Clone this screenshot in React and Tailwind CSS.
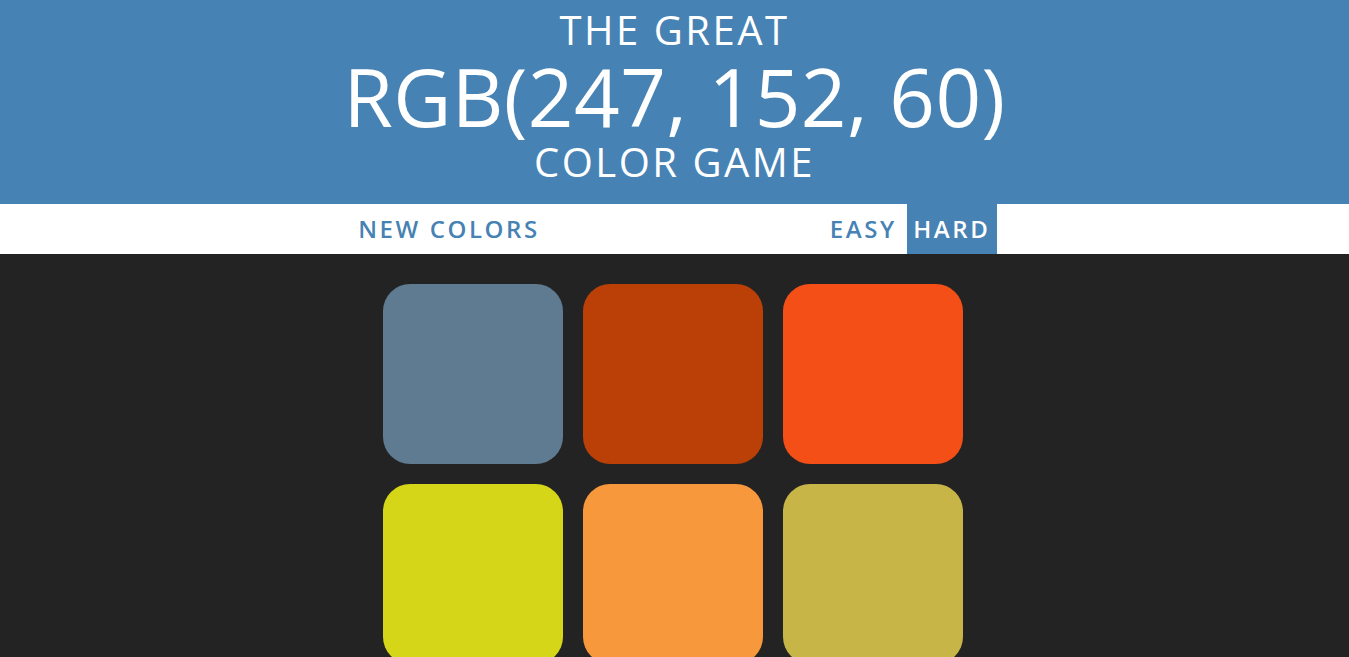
export default function App() {
  const colors = ["#5e7b91", "#ba4008", "#f44f17", "#d6d619", "#f7983c", "#c8b548"];
  return (
    <div className="min-h-[657px] bg-[#232323]" style={{ fontFamily: '"Open Sans", sans-serif' }}>
      <h1 className="bg-[#4682b4] text-white text-center uppercase font-normal pt-[8px] pb-[20px] leading-[1.1] text-[40px]">
        <div className="h-[44px] tracking-[2.5px]">The Great</div>
        <div className="text-[80px] h-[88px] leading-[88px] tracking-[0.4px]">RGB(247, 152, 60)</div>
        <div className="h-[44px] tracking-[2.5px]">Color Game</div>
      </h1>
      <div className="bg-white h-[50px] flex justify-center items-stretch gap-[4px] text-[24px] font-semibold uppercase text-[#4682b4]">
        <button className="px-[6px] uppercase tracking-[2.6px]">New Colors</button>
        <span className="w-[270px]"></span>
        <button className="px-[6px] uppercase tracking-[2.6px]">Easy</button>
        <button className="px-[5px] uppercase tracking-[2.6px] bg-[#4682b4] text-white w-[90px]">Hard</button>
      </div>
      <div className="w-[600px] ml-[calc(50%-302px)] mt-[20px] flex flex-wrap">
        {colors.map((c) => (
          <div key={c} className="w-[180px] h-[180px] m-[10px] rounded-[27px]" style={{ backgroundColor: c }} />
        ))}
      </div>
    </div>
  );
}
